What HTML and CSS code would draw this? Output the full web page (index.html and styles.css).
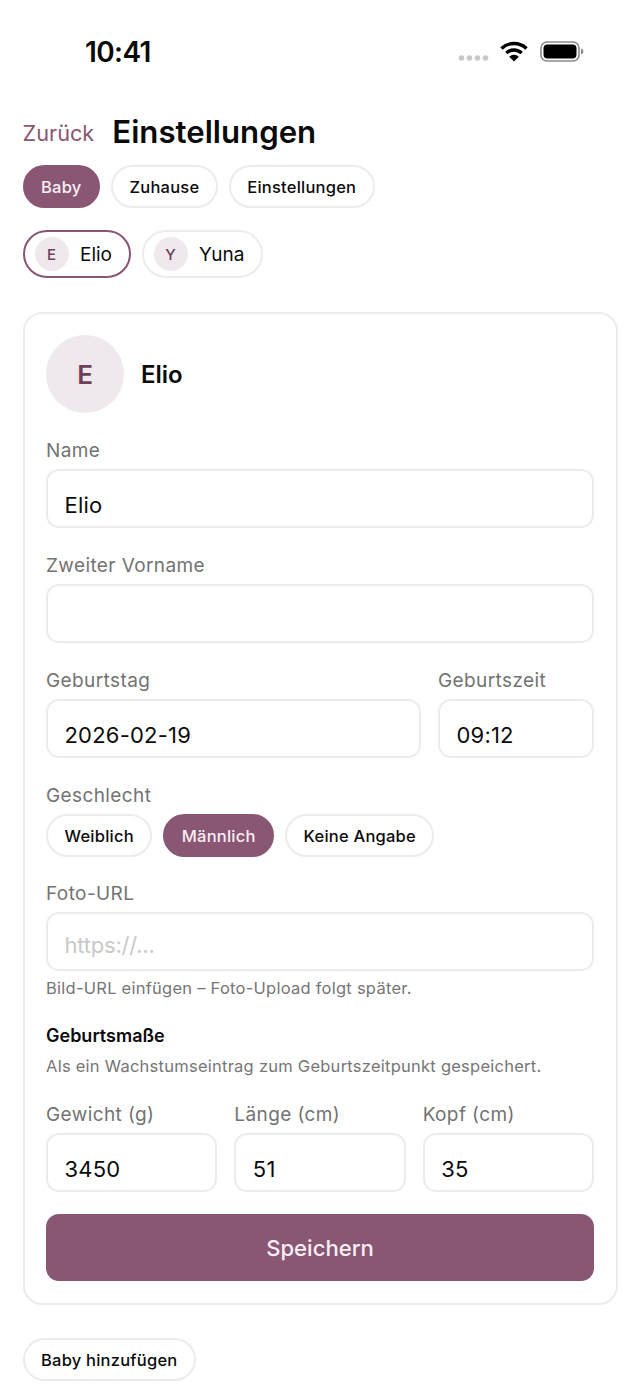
FILE: index.html
```html
<!DOCTYPE html>
<html lang="de">
<head>
<meta charset="utf-8">
<title>Einstellungen</title>
<link rel="stylesheet" href="styles.css">
</head>
<body>
<div class="status">
  <span class="time">10:41</span>
  <div class="status-icons">
    <svg class="dots" width="32" height="6" viewBox="0 0 32 6"><g fill="#c8c8c8"><circle cx="3.500" cy="3" r="2.800"/><circle cx="11.500" cy="3" r="2.800"/><circle cx="19.500" cy="3" r="2.800"/><circle cx="27.500" cy="3" r="2.800"/></g></svg>
    <svg class="wifi" width="28" height="21" viewBox="0 0 28 21"><path d="M1.500 7.500a18 18 0 0 1 25 0" fill="none" stroke="#000" stroke-width="3.400"/><path d="M6.300 12a11.200 11.200 0 0 1 15.400 0" fill="none" stroke="#000" stroke-width="3.400"/><path d="M14 20.500l-4.800-4.800a6.800 6.800 0 0 1 9.600 0z" fill="#000"/></svg>
    <svg class="battery" width="44" height="21" viewBox="0 0 44 21"><rect x="1" y="1" width="38" height="19" rx="6" fill="none" stroke="#8a8a8a" stroke-width="1.600"/><rect x="3.500" y="3.500" width="33" height="14" rx="4" fill="#000"/><path d="M41 7.500c1.600.5 2.400 1.600 2.400 3s-.8 2.500-2.400 3z" fill="#8a8a8a"/></svg>
  </div>
</div>
<main class="page">
  <header class="title-row">
    <span class="back">Zurück</span>
    <h1 class="title">Einstellungen</h1>
  </header>
  <nav class="chips tabs">
    <span class="chip active">Baby</span>
    <span class="chip">Zuhause</span>
    <span class="chip">Einstellungen</span>
  </nav>
  <div class="kids">
    <span class="kid selected"><span class="mini">E</span>Elio</span>
    <span class="kid"><span class="mini">Y</span>Yuna</span>
  </div>
  <section class="card">
    <div class="head">
      <span class="avatar">E</span>
      <span class="head-name">Elio</span>
    </div>
    <div class="field">
      <label class="label">Name</label>
      <div class="input">Elio</div>
    </div>
    <div class="field">
      <label class="label">Zweiter Vorname</label>
      <div class="input"></div>
    </div>
    <div class="row-date">
      <div class="field">
        <label class="label">Geburtstag</label>
        <div class="input">2026-02-19</div>
      </div>
      <div class="field">
        <label class="label">Geburtszeit</label>
        <div class="input">09:12</div>
      </div>
    </div>
    <div class="field gender">
      <label class="label">Geschlecht</label>
      <div class="chips">
        <span class="chip">Weiblich</span>
        <span class="chip active">Männlich</span>
        <span class="chip">Keine Angabe</span>
      </div>
    </div>
    <div class="field photo">
      <label class="label">Foto-URL</label>
      <div class="input placeholder">https://...</div>
      <p class="hint">Bild-URL einfügen – Foto-Upload folgt später.</p>
    </div>
    <h2 class="subhead">Geburtsmaße</h2>
    <p class="hint sub">Als ein Wachstumseintrag zum Geburtszeitpunkt gespeichert.</p>
    <div class="row-three">
      <div class="field">
        <label class="label">Gewicht (g)</label>
        <div class="input">3450</div>
      </div>
      <div class="field">
        <label class="label">Länge (cm)</label>
        <div class="input">51</div>
      </div>
      <div class="field">
        <label class="label">Kopf (cm)</label>
        <div class="input">35</div>
      </div>
    </div>
    <button class="save">Speichern</button>
  </section>
  <div class="add"><span class="chip">Baby hinzufügen</span></div>
</main>
</body>
</html>
```

FILE: styles.css
```css
* { box-sizing: border-box; }
html, body { margin: 0; padding: 0; background: #fff; }
body { font-family: Inter, "Liberation Sans", sans-serif; color: #0b0b0b; height: 1391px; overflow: hidden; }

.status { height: 100px; display: flex; justify-content: space-between; padding: 34px 56px 0 85px; }
.time { font-size: 28px; line-height: 36px; font-weight: 600; color: #0a0a0a; letter-spacing: -0.6px; }
.status-icons { display: flex; align-items: flex-start; }
.dots { margin-top: 21px; margin-right: 10px; }
.wifi { margin-top: 7px; margin-right: 12px; }
.battery { margin-top: 7px; }

.page { padding: 0 22.5px; }
.title-row { display: flex; align-items: center; gap: 18px; height: 65px; }
.back { font-size: 21.7px; color: #895673; }
.title { margin: 0; padding-bottom: 2px; font-size: 31.200px; font-weight: 600; }

.chips { display: flex; gap: 11px; }
.chip { display: inline-flex; align-items: center; height: 43px; padding: 0 16.5px; border: 2px solid #ececec; border-radius: 22px; font-size: 16.500px; font-weight: 450; background: #fff; letter-spacing: 0.22px; }
.chip.active { background: #895673; border-color: #895673; color: #fbeff5; }

.kids { display: flex; gap: 11px; margin-top: 22px; }
.kid { display: inline-flex; align-items: center; gap: 11.5px; height: 48px; padding: 0 16.5px 0 10px; border: 2px solid #ececec; border-radius: 24px; font-size: 19px; }
.kid.selected { border-color: #895673; }
.mini { width: 34px; height: 34px; border-radius: 50%; background: #efe9ed; color: #6e4159; display: flex; align-items: center; justify-content: center; font-size: 15px; font-weight: 500; }

.card { margin-top: 34px; border: 2px solid #ececec; border-radius: 19px; padding: 21px 21.5px 22px; }
.head { display: flex; align-items: center; gap: 17px; margin-bottom: 25px; }
.avatar { width: 78px; height: 78px; border-radius: 50%; background: #efe9ed; color: #6e4159; display: flex; align-items: center; justify-content: center; font-size: 26px; font-weight: 560; }
.head-name { font-size: 24px; font-weight: 600; }

.field { margin-bottom: 25px; }
.label { display: block; font-size: 19px; line-height: 25px; color: #737373; font-weight: 420; letter-spacing: 0.4px; margin-bottom: 6px; }
.input { height: 59px; border: 2px solid #ececec; border-radius: 13px; padding: 20px 16.5px 0; font-size: 22px; line-height: 29px; letter-spacing: 0.2px; color: #0b0b0b; }
.placeholder { color: #c9c9c9; letter-spacing: -0.2px; padding-top: 17px; }
.hint { margin: 6px 0 0; font-size: 16.500px; line-height: 22px; color: #767676; letter-spacing: 0.25px; }

.row-date { display: grid; grid-template-columns: 1fr 156px; gap: 17px; }
.row-three { display: grid; grid-template-columns: repeat(3, 1fr); gap: 17px; margin-top: 25px; }
.gender { margin-bottom: 24px; }
.photo { margin-bottom: 25px; }
.subhead { margin: 0; font-size: 18px; line-height: 24px; font-weight: 600; }
.hint.sub { margin-top: 7px; }
.row-three .field { margin-bottom: 22px; }
.save { display: block; width: 100%; height: 67px; border: 0; border-radius: 13px; background: #895673; color: #fbeff5; font: 550 22.100px Inter, sans-serif; }
.add { margin-top: 33px; }
```
